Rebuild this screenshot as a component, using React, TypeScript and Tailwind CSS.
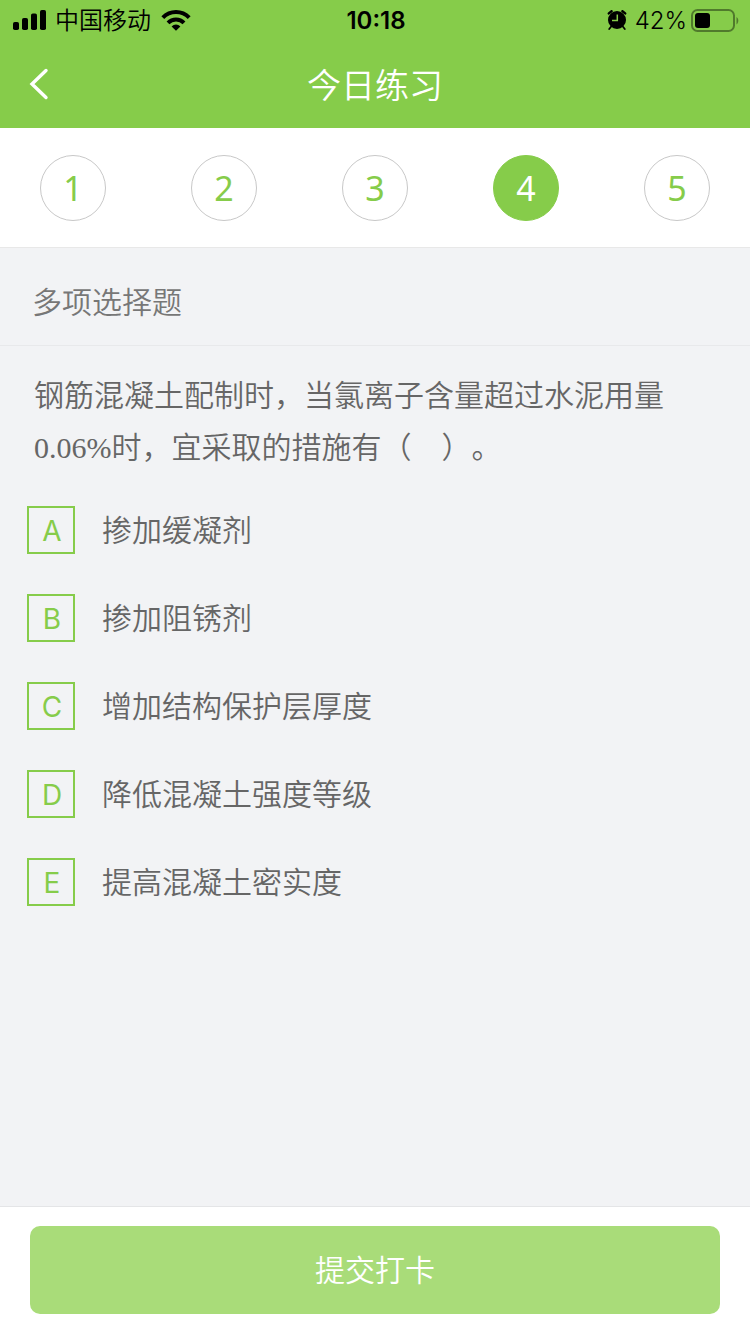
import { useState } from "react";
import { clsx } from "clsx";

type Option = {
  key: string;
  label: string;
};

const steps = [1, 2, 3, 4, 5];

const options: Option[] = [
  { key: "A", label: "掺加缓凝剂" },
  { key: "B", label: "掺加阻锈剂" },
  { key: "C", label: "增加结构保护层厚度" },
  { key: "D", label: "降低混凝土强度等级" },
  { key: "E", label: "提高混凝土密实度" }
];

function SignalIcon() {
  return (
    <svg width="34" height="22" viewBox="0 0 34 22" fill="currentColor" aria-hidden="true">
      <rect x="0" y="12" width="6" height="8" rx="1.8" />
      <rect x="9" y="8" width="6" height="12" rx="1.8" />
      <rect x="18" y="3.5" width="6" height="16.5" rx="1.8" />
      <rect x="27" y="0" width="6" height="20" rx="1.8" />
    </svg>
  );
}

function WifiIcon() {
  return (
    <svg width="30" height="22" viewBox="0 1 30 22" fill="none" stroke="currentColor" strokeWidth="4" aria-hidden="true">
      <path d="M1.8 8.6a18.6 18.6 0 0 1 26.4 0" />
      <path d="M7 13.8a11.3 11.3 0 0 1 16 0" />
      <path d="M10.6 17.4a6.2 6.2 0 0 1 8.8 0L15 21.8z" fill="currentColor" stroke="none" />
    </svg>
  );
}

function AlarmIcon() {
  return (
    <svg width="20" height="22" viewBox="0 1 20 22" fill="none" stroke="currentColor" aria-hidden="true">
      <circle cx="10" cy="11" r="9" fill="currentColor" stroke="none" />
      <path d="M1.8 4.4 4.6 2.2M18.2 4.4 15.4 2.2" strokeWidth="2.4" strokeLinecap="round" />
      <path d="M4 17.8 2.2 20M16 17.8l1.8 2.2" strokeWidth="1.8" strokeLinecap="round" />
      <path d="M10.3 5.4v6H5" stroke="#86cc4a" strokeWidth="1.5" />
    </svg>
  );
}

function BatteryIcon() {
  return (
    <svg width="48" height="24" viewBox="0 0 48 24" fill="none" aria-hidden="true">
      <rect x="1" y="1" width="42" height="21" rx="5.5" stroke="#000" strokeOpacity="0.4" strokeWidth="2" />
      <rect x="4" y="4" width="15" height="15" rx="3" fill="#000" />
      <path d="M45.5 8c2.4 1.4 2.4 6 0 7.4z" fill="#000" fillOpacity="0.4" />
    </svg>
  );
}

function StatusBar() {
  return (
    <div className="grid h-10 grid-cols-3 items-center pt-px pr-[11px] pl-[13px] text-2xl text-black">
      <div className="flex items-center gap-2">
        <SignalIcon />
        <span>中国移动</span>
        <span className="pl-[2px]">
          <WifiIcon />
        </span>
      </div>
      <span className="text-center font-semibold">10:18</span>
      <div className="flex items-center justify-end gap-1">
        <AlarmIcon />
        <span className="pl-1">42%</span>
        <BatteryIcon />
      </div>
    </div>
  );
}

export default function App() {
  const [current, setCurrent] = useState(4);

  return (
    <div className="flex min-h-screen flex-col bg-[#f2f3f5] font-['Inter','Noto_Sans_CJK_SC',sans-serif] font-[350]">
      <header className="bg-[#86cc4a]">
        <StatusBar />
        <div className="grid h-22 grid-cols-[1fr_auto_1fr] items-center px-7 text-white">
          <button type="button" aria-label="返回" className="w-12">
            <svg width="22" height="32" viewBox="0 0 22 32" fill="none" stroke="currentColor" strokeWidth="3.4" aria-hidden="true">
              <path d="M18 2.5 4 16l14 13.5" strokeLinecap="round" />
            </svg>
          </button>
          <h1 className="pt-[2px] text-[34px]">今日练习</h1>
        </div>
      </header>

      <nav className="flex h-[120px] items-center justify-between border-b border-[#e8e8e8] bg-white px-10">
        {steps.map((step) => (
          <button
            key={step}
            type="button"
            onClick={() => setCurrent(step)}
            className={clsx(
              "size-[66px] rounded-full border pt-[2px] font-['Noto_Sans',sans-serif] text-[34px] font-normal",
              step === current
                ? "border-[#86cc4a] bg-[#86cc4a] text-white"
                : "border-[#c8c8c8] bg-white text-[#86cc4a]"
            )}
          >
            {step}
          </button>
        ))}
      </nav>

      <main className="flex-1">
        <h2 className="flex h-[98px] items-center border-b border-[#e8e9eb] px-8 pt-3 text-[30px] text-[#777]">
          多项选择题
        </h2>
        <p className="px-[34px] pt-6 font-['Liberation_Serif','Noto_Sans_CJK_SC',serif] text-[30px] leading-[52px] text-[#666] [text-spacing-trim:space-all]">
          钢筋混凝土配制时，当氯离子含量超过水泥用量0.06%时，宜采取的措施有（　）。
        </p>
        <div className="flex flex-col gap-10 px-[27px] pt-8">
          {options.map((option) => (
            <label key={option.key} className="flex items-center gap-[27px] text-[30px] leading-[48px] text-[#666]">
              <span className="grid size-12 shrink-0 place-items-center">
                <input
                  type="checkbox"
                  name="answer"
                  value={option.key}
                  className="peer col-start-1 row-start-1 size-12 appearance-none border-2 border-[#86cc4a] checked:bg-[#86cc4a]"
                />
                <span className="col-start-1 row-start-1 pt-[2px] pl-[2px] text-[28px] leading-[46px] font-normal text-[#86cc4a] peer-checked:text-white">
                  {option.key}
                </span>
              </span>
              {option.label}
            </label>
          ))}
        </div>
      </main>

      <footer className="border-t border-[#e4e5e7] bg-white px-[30px] pt-[19px] pb-5">
        <button type="button" className="h-22 w-full rounded-[10px] bg-[#a9dc79] text-[30px] text-white">
          提交打卡
        </button>
      </footer>
    </div>
  );
}
